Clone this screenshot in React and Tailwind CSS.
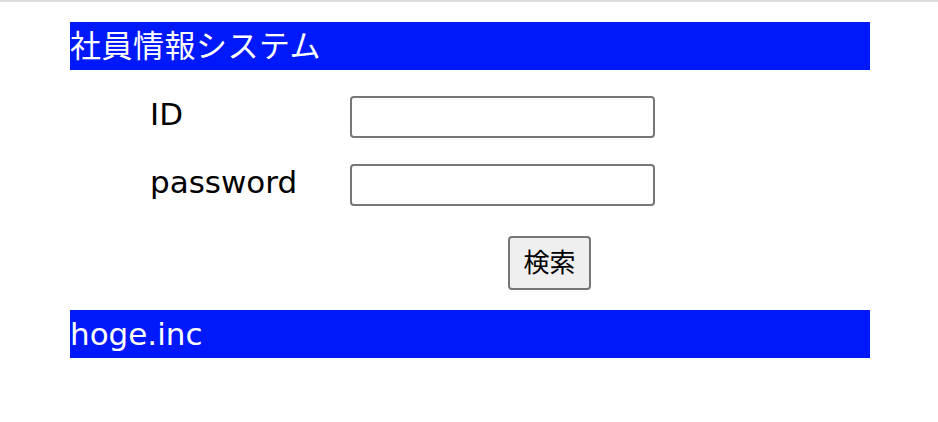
import React, { useState } from "react";

const font = { fontFamily: '"DejaVu Sans", "Noto Sans CJK JP", sans-serif' };

function Field({ label, type, value, onChange }) {
  return (
    <div className="flex items-start">
      <div className="w-[280px] shrink-0 pl-[80px] text-[31px] leading-[36px] text-black whitespace-nowrap">{label}</div>
      <input
        type={type}
        value={value}
        onChange={(e) => onChange(e.target.value)}
        className="w-[305px] h-[42px] border-2 border-[#767676] rounded-[4px] bg-white px-2 text-[20px] outline-none"
      />
    </div>
  );
}

export default function App() {
  const [id, setId] = useState("");
  const [password, setPassword] = useState("");

  return (
    <div className="w-[938px] h-[422px] bg-white" style={font}>
      <div className="h-[2px] bg-[#dcdcdc]" />
      <div className="w-[800px] ml-[70px] mt-[20px]">
        <div className="h-[48px] bg-[#0019fa] text-white text-[31px] leading-[48px] tracking-[0.5px]">社員情報システム</div>

        <div className="flex flex-col gap-[26px] pt-[26px]">
          <Field label="ID" type="text" value={id} onChange={setId} />
          <Field label="password" type="password" value={password} onChange={setPassword} />
        </div>

        <div className="pl-[438px] pt-[30px] pb-[20px]">
          <button className="w-[83px] h-[54px] flex items-center justify-center border-2 border-[#767676] rounded-[4px] bg-[#efefef] text-[26px] text-black">
            検索
          </button>
        </div>

        <div className="h-[48px] bg-[#0019fa] text-white text-[31px] leading-[48px]">hoge.inc</div>
      </div>
    </div>
  );
}
